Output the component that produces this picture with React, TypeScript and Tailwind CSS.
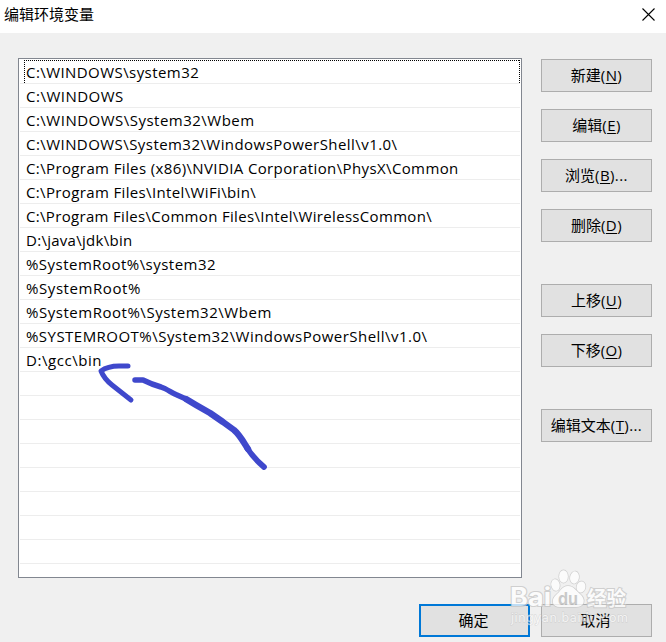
import clsx from "clsx";

const ROW_COUNT = 21;

const paths = [
  { text: "C:\\WINDOWS\\system32", tracking: "tracking-[0.43px]" },
  { text: "C:\\WINDOWS", tracking: "tracking-[0.5px]" },
  { text: "C:\\WINDOWS\\System32\\Wbem", tracking: "tracking-[0.49px]" },
  { text: "C:\\WINDOWS\\System32\\WindowsPowerShell\\v1.0\\", tracking: "tracking-[0.44px]" },
  { text: "C:\\Program Files (x86)\\NVIDIA Corporation\\PhysX\\Common", tracking: "tracking-[0.38px]" },
  { text: "C:\\Program Files\\Intel\\WiFi\\bin\\", tracking: "tracking-[0.36px]" },
  { text: "C:\\Program Files\\Common Files\\Intel\\WirelessCommon\\", tracking: "tracking-[0.32px]" },
  { text: "D:\\java\\jdk\\bin", tracking: "tracking-[0.28px]" },
  { text: "%SystemRoot%\\system32", tracking: "tracking-[0.47px]" },
  { text: "%SystemRoot%", tracking: "tracking-[0.58px]" },
  { text: "%SystemRoot%\\System32\\Wbem", tracking: "tracking-[0.53px]" },
  { text: "%SYSTEMROOT%\\System32\\WindowsPowerShell\\v1.0\\", tracking: "tracking-[0.47px]" },
  { text: "D:\\gcc\\bin", tracking: "tracking-[0.55px]" },
];

const actions = [
  { label: "新建", hotkey: "N", gap: "" },
  { label: "编辑", hotkey: "E", gap: "mt-[17px]" },
  { label: "浏览", hotkey: "B", more: true, gap: "mt-[17px]" },
  { label: "删除", hotkey: "D", gap: "mt-[17px]" },
  { label: "上移", hotkey: "U", gap: "mt-[42px]" },
  { label: "下移", hotkey: "O", gap: "mt-[17px]" },
  { label: "编辑文本", hotkey: "T", more: true, gap: "mt-[42px]" },
];

function Button({ children, className }: { children: React.ReactNode; className?: string }) {
  return (
    <button
      className={clsx(
        "flex h-[33px] w-[111px] shrink-0 items-center justify-center whitespace-nowrap bg-[#e1e1e1] pb-0.5 text-[15px] leading-5",
        className,
      )}
    >
      {children}
    </button>
  );
}

function PathRow({ text, tracking, focused }: { text?: string; tracking?: string; focused: boolean }) {
  return (
    <li className="relative mx-px h-6 border-b border-[#ededed] pl-[6px]">
      {focused && (
        <svg className="absolute left-1 top-0" width="496" height="23" fill="none" stroke="#000" strokeDasharray="1 1">
          <path d="M0 .5h496M.5 0v23M495.5 0v23" />
        </svg>
      )}
      <span className={clsx("block whitespace-pre leading-[25px]", tracking)}>{text}</span>
    </li>
  );
}

function Arrow() {
  return (
    <svg
      className="pointer-events-none absolute left-[96px] top-[360px]"
      width="174"
      height="112"
      viewBox="96 360 174 112"
      fill="none"
      stroke="#3f48cc"
      strokeLinecap="round"
      strokeLinejoin="round"
    >
      <path strokeWidth="5" d="M128 366H119C112 366 105 368 101 371C103 376 107 381 112 385L131 400" />
      <path strokeWidth="5.5" d="M135 380H143C149 383 154 385 161 387C167 389 172 393 177 395L186 399" />
      <path strokeWidth="6.4" d="M186 399L196 405L210 413L223 422L234 430C240 435 244 443 248 449" />
      <path strokeWidth="5.7" d="M247 448C251 454 257 461 264 467" />
    </svg>
  );
}

function Watermark() {
  return (
    <svg
      className="pointer-events-none absolute left-[506px] top-[564px]"
      width="130"
      height="64"
      viewBox="506 564 130 64"
      fill="#fff"
      stroke="#c4c4c4"
      paintOrder="stroke"
      fontFamily="Inter, Noto Sans CJK SC, sans-serif"
      opacity="0.75"
    >
      <g strokeWidth="1.4">
        <ellipse cx="555.5" cy="585" rx="4.2" ry="5.8" transform="rotate(-12 555.5 585)" />
        <ellipse cx="563.5" cy="576.5" rx="4.4" ry="6.2" />
        <ellipse cx="574.5" cy="577.5" rx="4.4" ry="6.2" transform="rotate(10 574.5 577.5)" />
        <ellipse cx="581" cy="587" rx="4.4" ry="5.6" transform="rotate(12 581 587)" />
        <path d="M568 586C562 586 560 592 557 594C550 600 552 607 560 607H576C585 607 586 599 580 594C576 591 574 586 568 586Z" />
      </g>
      <g fontWeight="700" strokeWidth="2">
        <text x="510" y="606" fontSize="25" textLength="41" lengthAdjust="spacingAndGlyphs">Bai</text>
        <text x="587" y="606" fontSize="20" textLength="39" lengthAdjust="spacingAndGlyphs">经验</text>
      </g>
      <text x="558" y="604.5" fontSize="17" fontWeight="700" fill="#bdbdbd" stroke="none" textLength="20" lengthAdjust="spacingAndGlyphs">
        du
      </text>
      <text x="511" y="622" fontSize="12.5" strokeWidth="0.8" opacity="0.8" textLength="117">jingyan.baidu.com</text>
    </svg>
  );
}

export default function App() {
  return (
    <div className="relative flex h-[642px] w-[666px] flex-col overflow-hidden bg-[#f0f0f0] font-['Open_Sans','Noto_Sans_CJK_SC',sans-serif] text-[15px] text-black">
      <header className="flex h-[33px] shrink-0 items-start justify-between bg-white pl-1 pr-[11px]">
        <h1 className="pt-[3px] text-[15px] leading-[22px]">编辑环境变量</h1>
        <svg className="mt-2" width="13" height="13" viewBox="0 0 13 13" fill="none" stroke="#000" strokeWidth="1.1">
          <path d="M.5.5l12 12M12.5.5l-12 12" />
        </svg>
      </header>

      <main className="flex gap-[19px] pl-[18px] pt-[25px]">
        <ul className="h-[520px] w-[504px] border border-[#828790] bg-white pt-px">
          {Array.from({ length: ROW_COUNT }, (_, i) => (
            <PathRow key={i} {...paths[i]} focused={i === 0} />
          ))}
        </ul>
        <div className="flex flex-col pt-px">
          {actions.map((a) => (
            <Button key={a.hotkey} className={clsx("border border-[#adadad]", a.gap)}>
              {a.label}
              <span className="tracking-[0.4px]">
                (<span className="underline underline-offset-2">{a.hotkey}</span>){a.more && "..."}
              </span>
            </Button>
          ))}
        </div>
      </main>

      <footer className="mt-[26px] flex gap-[11px] pl-[419px]">
        <Button className="border-2 border-[#0078d7] pr-0.5">确定</Button>
        <Button className="border border-[#adadad] pr-0.5">取消</Button>
      </footer>

      <Watermark />
      <Arrow />
    </div>
  );
}
